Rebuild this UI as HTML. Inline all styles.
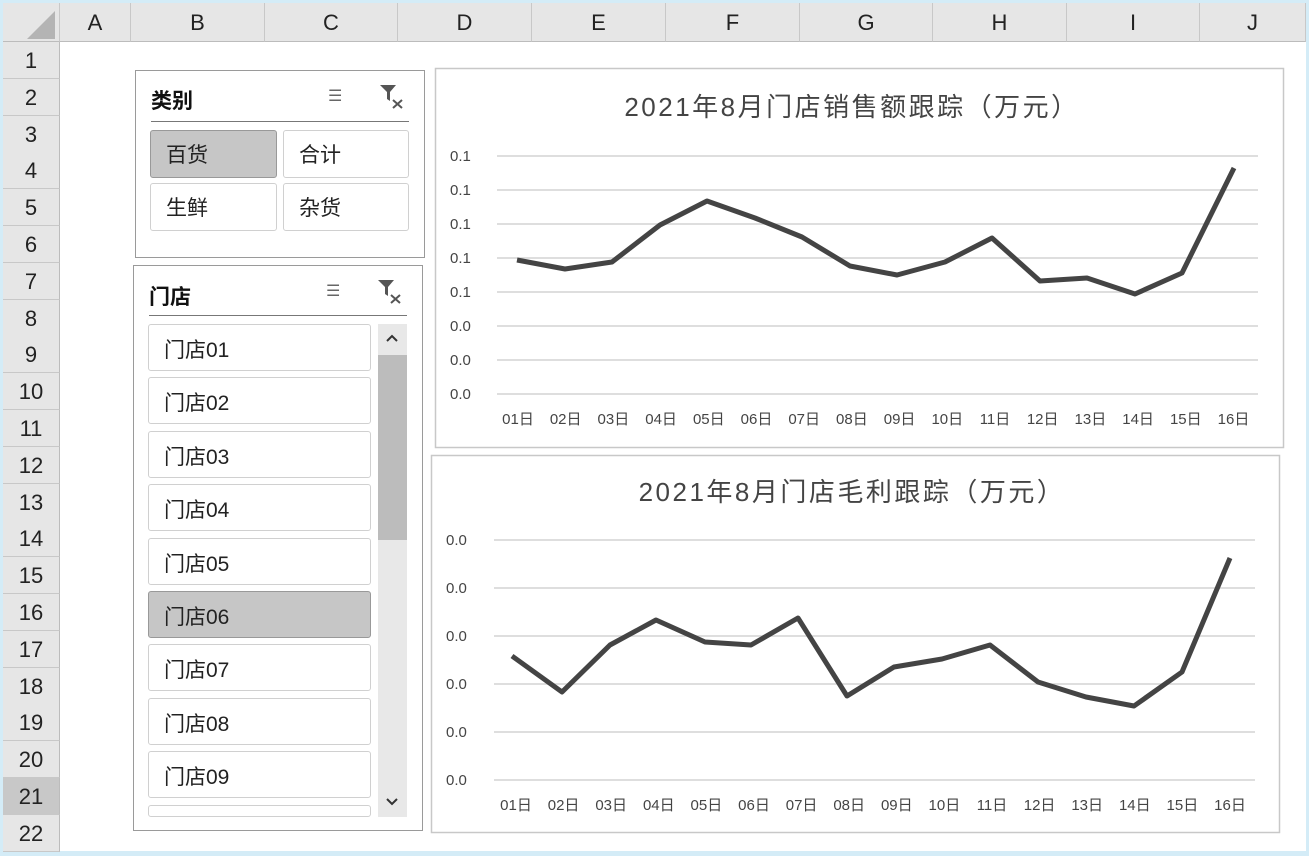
<!DOCTYPE html><html><head><meta charset="utf-8"><style>
body{margin:0;width:1309px;height:856px;background:#d4ecf7;position:relative;overflow:hidden;font-family:"Liberation Sans","Noto Sans CJK SC",sans-serif;}
.a{position:absolute}
.sheet{left:3px;top:3px;width:1303px;height:848px;background:#fff}
.ch{top:3px;height:39px;background:#e6e6e6;border-bottom:1px solid #bcbcbc;font-size:22px;color:#222;text-align:center;line-height:39px;box-sizing:border-box;border-right:1px solid #c8c8c8}
.rh{left:3px;width:57px;background:#e6e6e6;border-right:1px solid #bcbcbc;border-bottom:1px solid #c8c8c8;font-size:22px;color:#222;text-align:center;box-sizing:border-box}
.sl{background:#fff;border:1px solid #9a9a9a}
.btn{border:1px solid #d0d0d0;border-radius:3px;background:#fff;font-size:21px;color:#222;box-sizing:border-box;padding-left:15px}
.sel{background:#c6c6c6;border-color:#999}
.t{font-weight:bold;font-size:21px;color:#111}
</style></head><body>
<div class="a sheet"></div>
<div class="a ch" style="left:3px;width:57px;background:#e6e6e6"><svg width="57" height="39"><polygon points="52,8 52,36 24,36" fill="#b4b4b4"/></svg></div>
<div class="a ch" style="left:60px;width:71px">A</div>
<div class="a ch" style="left:131px;width:134px">B</div>
<div class="a ch" style="left:265px;width:133px">C</div>
<div class="a ch" style="left:398px;width:134px">D</div>
<div class="a ch" style="left:532px;width:134px">E</div>
<div class="a ch" style="left:666px;width:134px">F</div>
<div class="a ch" style="left:800px;width:133px">G</div>
<div class="a ch" style="left:933px;width:134px">H</div>
<div class="a ch" style="left:1067px;width:133px">I</div>
<div class="a ch" style="left:1200px;width:106px">J</div>
<div id="rows"></div>
<script>
var h='';for(var i=1;i<=22;i++){var t=42+(i-1)*36.8;h+='<div class="a rh" style="top:'+t+'px;height:37px;line-height:37px;'+(i==21?'background:#c8c8c8;':'')+'">'+i+'</div>';}
document.getElementById('rows').innerHTML=h;
</script>

<!-- slicer 1 -->
<div class="a sl" style="left:135px;top:70px;width:288px;height:186px"></div>
<div class="a t" style="left:151px;top:85px">类别</div>
<div class="a" style="left:328px;top:86px;font-size:16px;color:#666">☰</div>
<svg class="a" style="left:378px;top:83px" width="28" height="28"><path d="M2 2h16l-6 7v9l-3-2v-7z" fill="#555"/><path d="M15 17l9 8M24 17l-9 8" stroke="#555" stroke-width="2"/></svg>
<div class="a" style="left:151px;top:121px;width:258px;height:1px;background:#777"></div>
<div class="a btn sel" style="left:150px;top:130px;width:127px;height:48px;line-height:50px">百货</div>
<div class="a btn" style="left:283px;top:130px;width:126px;height:48px;line-height:50px">合计</div>
<div class="a btn" style="left:150px;top:183px;width:127px;height:48px;line-height:50px">生鲜</div>
<div class="a btn" style="left:283px;top:183px;width:126px;height:48px;line-height:50px">杂货</div>

<!-- slicer 2 -->
<div class="a sl" style="left:133px;top:265px;width:288px;height:564px"></div>
<div class="a t" style="left:149px;top:281px">门店</div>
<div class="a" style="left:326px;top:281px;font-size:16px;color:#666">☰</div>
<svg class="a" style="left:376px;top:278px" width="28" height="28"><path d="M2 2h16l-6 7v9l-3-2v-7z" fill="#555"/><path d="M15 17l9 8M24 17l-9 8" stroke="#555" stroke-width="2"/></svg>
<div class="a" style="left:149px;top:315px;width:258px;height:1px;background:#777"></div>
<div class="a" style="left:378px;top:324px;width:29px;height:493px;background:#e8e8e8"></div>
<div class="a" style="left:378px;top:355px;width:29px;height:185px;background:#bcbcbc"></div>
<svg class="a" style="left:385px;top:333px" width="14" height="10"><path d="M2 8l5-5 5 5" stroke="#333" stroke-width="2" fill="none"/></svg>
<svg class="a" style="left:385px;top:797px" width="14" height="10"><path d="M2 2l5 5 5-5" stroke="#333" stroke-width="2" fill="none"/></svg>
<div id="items"></div>
<script>
var h='';for(var i=1;i<=10;i++){var t=324+(i-1)*53.4;var hh=(i==10)?12:47;h+='<div class="a btn'+(i==6?' sel':'')+'" style="left:148px;top:'+t+'px;width:223px;height:'+hh+'px;line-height:51px;overflow:hidden">'+(i<10?'门店0'+i:'')+'</div>';}
document.getElementById('items').innerHTML=h;
</script>

<!-- charts -->
<svg class="a" style="left:0;top:0" width="1309" height="856" font-family="Liberation Sans, Noto Sans CJK SC, sans-serif">
<rect x="435.5" y="68.5" width="848" height="379" fill="#fff" stroke="#c8c8c8" stroke-width="1.5"/>
<text x="852" y="116" font-size="26" letter-spacing="2.5" text-anchor="middle" fill="#444">2021年8月门店销售额跟踪（万元）</text>
<g stroke="#d4d4d4" stroke-width="1.5">
<line x1="497" x2="1258" y1="156" y2="156"/><line x1="497" x2="1258" y1="190" y2="190"/><line x1="497" x2="1258" y1="224" y2="224"/><line x1="497" x2="1258" y1="258" y2="258"/><line x1="497" x2="1258" y1="292" y2="292"/><line x1="497" x2="1258" y1="326" y2="326"/><line x1="497" x2="1258" y1="360" y2="360"/><line x1="497" x2="1258" y1="394" y2="394"/></g>
<g font-size="15" fill="#444">
<text x="450" y="161">0.1</text><text x="450" y="195">0.1</text><text x="450" y="229">0.1</text><text x="450" y="263">0.1</text><text x="450" y="297">0.1</text><text x="450" y="331">0.0</text><text x="450" y="365">0.0</text><text x="450" y="399">0.0</text></g>
<polyline fill="none" stroke="#444" stroke-width="5" stroke-linejoin="round" points="517,260 565,269 612,262 660,225 707,201 755,218 802,237 850,266 897,275 945,262 992,238 1040,281 1087,278 1135,294 1182,273 1234,168"/>
<g id="x1" font-size="15" fill="#444" text-anchor="middle"></g>

<rect x="431.5" y="455.5" width="848" height="377" fill="#fff" stroke="#c8c8c8" stroke-width="1.5"/>
<text x="852" y="501" font-size="26" letter-spacing="2.5" text-anchor="middle" fill="#444">2021年8月门店毛利跟踪（万元）</text>
<g stroke="#d4d4d4" stroke-width="1.5">
<line x1="494" x2="1255" y1="540" y2="540"/><line x1="494" x2="1255" y1="588" y2="588"/><line x1="494" x2="1255" y1="636" y2="636"/><line x1="494" x2="1255" y1="684" y2="684"/><line x1="494" x2="1255" y1="732" y2="732"/><line x1="494" x2="1255" y1="780" y2="780"/></g>
<g font-size="15" fill="#444">
<text x="446" y="545">0.0</text><text x="446" y="593">0.0</text><text x="446" y="641">0.0</text><text x="446" y="689">0.0</text><text x="446" y="737">0.0</text><text x="446" y="785">0.0</text></g>
<polyline fill="none" stroke="#444" stroke-width="5" stroke-linejoin="round" points="512,656 562,692 610,645 656,620 705,642 751,645 798,618 847,696 894,667 942,659 990,645 1038,682 1086,697 1134,706 1182,672 1230,558"/>
<g id="x2" font-size="15" fill="#444" text-anchor="middle"></g>
</svg>
<script>
var a='',b='';for(var i=1;i<=16;i++){var l=(i<10?'0':'')+i+'日';a+='<text x="'+(518+(i-1)*47.7)+'" y="424">'+l+'</text>';b+='<text x="'+(516+(i-1)*47.6)+'" y="810">'+l+'</text>';}
document.getElementById('x1').innerHTML=a;document.getElementById('x2').innerHTML=b;
</script>
</body></html>
